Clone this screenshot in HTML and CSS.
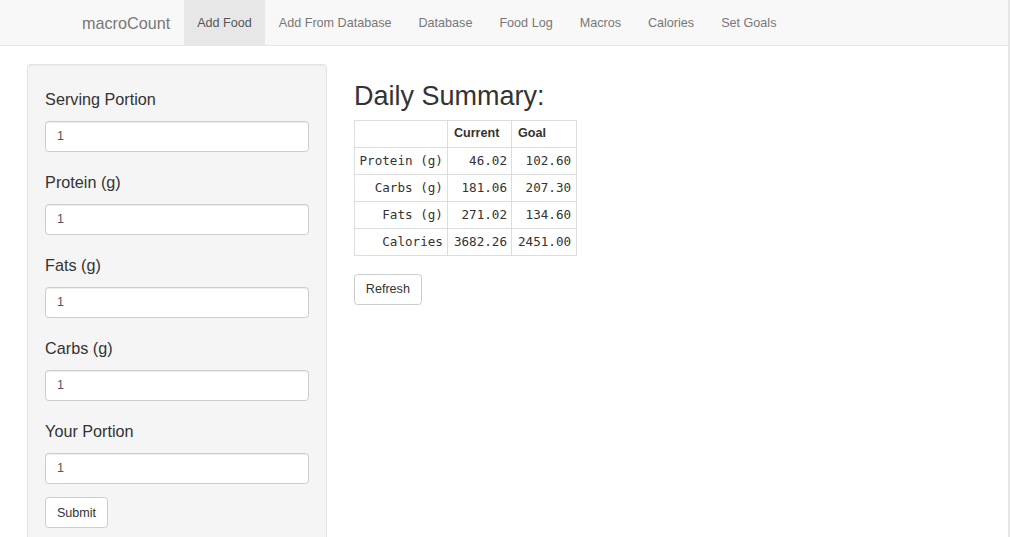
FILE: index.html
```html
<!DOCTYPE html>
<html>
<head>
<meta charset="utf-8">
<title>macroCount</title>
<link rel="stylesheet" href="styles.css">
</head>
<body>
<nav class="navbar">
  <a class="brand" href="#">macroCount</a>
  <ul class="nav">
    <li class="active"><a href="#">Add Food</a></li>
    <li><a href="#">Add From Database</a></li>
    <li><a href="#">Database</a></li>
    <li><a href="#">Food Log</a></li>
    <li><a href="#">Macros</a></li>
    <li><a href="#">Calories</a></li>
    <li><a href="#">Set Goals</a></li>
  </ul>
</nav>
<div class="row">
  <div class="col-side">
    <form class="well">
      <div class="form-group">
        <h4 class="label">Serving Portion</h4>
        <input class="form-control" type="text" value="1">
      </div>
      <div class="form-group">
        <h4 class="label">Protein (g)</h4>
        <input class="form-control" type="text" value="1">
      </div>
      <div class="form-group">
        <h4 class="label">Fats (g)</h4>
        <input class="form-control" type="text" value="1">
      </div>
      <div class="form-group">
        <h4 class="label">Carbs (g)</h4>
        <input class="form-control" type="text" value="1">
      </div>
      <div class="form-group">
        <h4 class="label">Your Portion</h4>
        <input class="form-control" type="text" value="1">
      </div>
      <button class="btn" type="button">Submit</button>
    </form>
  </div>
  <div class="col-main">
    <h2 class="title">Daily Summary:</h2>
    <table class="summary">
      <thead>
        <tr><th></th><th>Current</th><th>Goal</th></tr>
      </thead>
      <tbody>
        <tr><td>Protein (g)</td><td>46.02</td><td>102.60</td></tr>
        <tr><td>Carbs (g)</td><td>181.06</td><td>207.30</td></tr>
        <tr><td>Fats (g)</td><td>271.02</td><td>134.60</td></tr>
        <tr><td>Calories</td><td>3682.26</td><td>2451.00</td></tr>
      </tbody>
    </table>
    <button class="btn" type="button">Refresh</button>
  </div>
</div>
</body>
</html>
```
FILE: styles.css
```css
* { box-sizing: border-box; }
html { background: #fff; }
body {
  margin: 0;
  font-family: "Liberation Sans", Arial, sans-serif;
  font-size: 12.6px;
  line-height: 18px;
  color: #333;
  border-right: 2px solid #e6e6e6;
  min-height: 100vh;
}
.navbar {
  display: flex;
  align-items: stretch;
  height: 46px;
  background: #f8f8f8;
  border-bottom: 1px solid #e7e7e7;
  padding-left: 68.5px;
  margin-bottom: 18px;
}
.brand {
  display: block;
  padding: 13.5px 13.5px;
  font-size: 16.2px;
  line-height: 18px;
  color: #777;
  text-decoration: none;
}
.nav {
  display: flex;
  list-style: none;
  margin: 0;
  padding: 0;
}
.nav li a {
  display: block;
  padding: 13.5px 13.5px;
  height: 45px;
  font-size: 12.6px;
  line-height: 18px;
  color: #777;
  text-decoration: none;
}
.nav li.active a {
  background: #e7e7e7;
  color: #555;
}
.row {
  display: flex;
  padding: 0 13.5px;
}
.col-side {
  width: 327px;
  padding: 0 13.5px;
}
.col-main {
  flex: 1;
  padding: 0 13.5px;
}
.well {
  background: #f5f5f5;
  border: 1px solid #e3e3e3;
  border-radius: 3.6px;
  box-shadow: inset 0 1px 1px rgba(0,0,0,.05);
  padding: 17.1px 17.1px 30px;
  margin: 0;
}
.form-group {
  display: flow-root;
  margin-bottom: 13.2px;
}
.label {
  margin: 9px 0 12px;
  font-size: 16.2px;
  font-weight: 500;
  line-height: 17.8px;
  color: #333;
}
.form-control {
  display: block;
  width: 100%;
  height: 31px;
  padding: 5.4px 10.8px;
  font-family: "Liberation Sans", Arial, sans-serif;
  font-size: 12.6px;
  line-height: 18px;
  color: #555;
  background: #fff;
  border: 1px solid #ccc;
  border-radius: 3.6px;
  box-shadow: inset 0 1px 1px rgba(0,0,0,.075);
}
.btn {
  display: inline-block;
  padding: 5.4px 10.8px;
  font-family: "Liberation Sans", Arial, sans-serif;
  font-size: 12.6px;
  line-height: 18px;
  color: #333;
  background: #fff;
  border: 1px solid #ccc;
  border-radius: 3.6px;
  height: 31px;
}
.title {
  margin: 18px 0 8px;
  font-size: 27px;
  font-weight: 500;
  line-height: 29.7px;
  color: #333;
}
.summary {
  border-collapse: collapse;
  margin-bottom: 18px;
  background: #fff;
}
.summary th, .summary td {
  border: 1px solid #ddd;
  padding: 4.5px 4.5px;
  line-height: 17px;
  height: 27px;
}
.summary th + th, .summary td + td {
  padding-left: 5.5px;
}
.summary th {
  text-align: left;
  font-weight: bold;
  font-size: 12.6px;
}
.summary td {
  text-align: right;
  font-family: "DejaVu Sans Mono", monospace;
  font-size: 12.6px;
  color: #333;
}
```
